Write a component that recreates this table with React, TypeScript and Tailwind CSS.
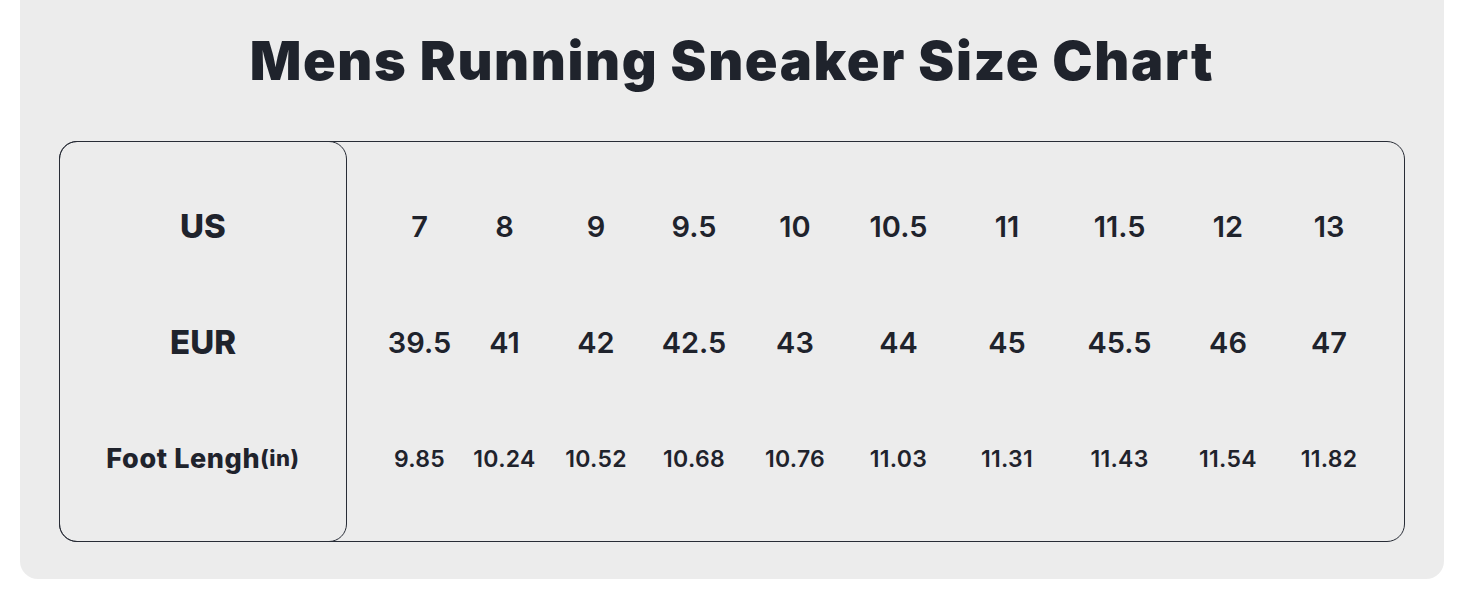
const US = ["7", "8", "9", "9.5", "10", "10.5", "11", "11.5", "12", "13"];
const EUR = ["39.5", "41", "42", "42.5", "43", "44", "45", "45.5", "46", "47"];
const LENGTH = ["9.85", "10.24", "10.52", "10.68", "10.76", "11.03", "11.31", "11.43", "11.54", "11.82"];

const COLS = "grid grid-cols-[83px_87px_96px_100px_102px_105px_112px_113px_104px_98px]";

function Row({ values, small }: { values: string[]; small?: boolean }) {
  return (
    <div className={`${COLS} h-[116px] items-center`}>
      {values.map((v, i) => (
        <div
          key={i}
          className={`text-center leading-none font-semibold ${small ? "text-[23px] pt-[2px] tracking-[0.3px]" : "text-[29px]"}`}
        >
          {v}
        </div>
      ))}
    </div>
  );
}

export default function App() {
  return (
    <div className="min-h-[600px] bg-white text-[#1f232c] font-['Inter',sans-serif]">
      <div className="mx-[20px] bg-[#ececec] rounded-b-[18px] px-[39px] pb-[37px]">
        <h1 className="pt-[34px] text-center text-[54px] leading-none font-black tracking-[1.6px]">
          Mens Running Sneaker Size Chart
        </h1>

        <div className="mt-[53px] flex border border-[#282c36] rounded-[18px]">
          <div className="-my-px -ml-px w-[288px] shrink-0 border border-[#282c36] rounded-[18px] pt-[26px] pb-[25px]">
            <div className="h-[116px] flex items-center justify-center text-[33px] font-extrabold leading-none">
              US
            </div>
            <div className="h-[116px] flex items-center justify-center text-[33px] font-extrabold leading-none">
              EUR
            </div>
            <div className="h-[116px] flex items-center justify-center font-extrabold leading-none tracking-[0.6px]">
              <span className="text-[27px]">Foot Lengh</span>
              <span className="text-[22px]">(in)</span>
            </div>
          </div>

          <div className="pl-[31px] pt-[26px] pb-[25px]">
            <Row values={US} />
            <Row values={EUR} />
            <Row values={LENGTH} small />
          </div>
        </div>
      </div>
    </div>
  );
}
